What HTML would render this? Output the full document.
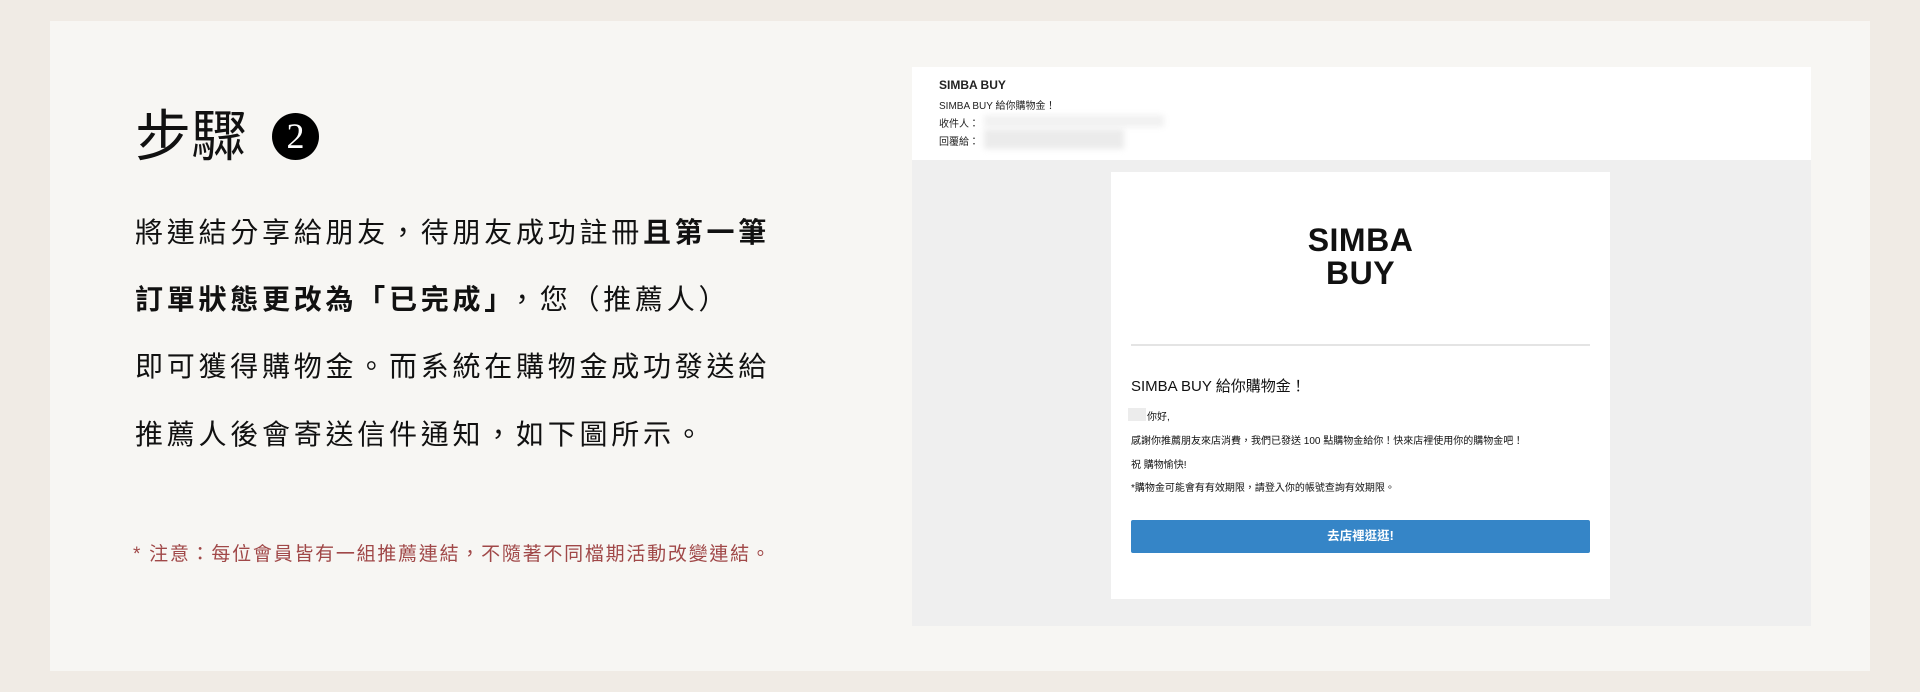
<!DOCTYPE html>
<html><head><meta charset="utf-8">
<style>
*{margin:0;padding:0;box-sizing:border-box}
body{width:1920px;height:692px;background:#f0ebe5;position:relative;overflow:hidden;font-family:"Liberation Sans","Noto Sans CJK TC",sans-serif;color:#111}
.panel{position:absolute;left:50px;top:21px;width:1820px;height:650px;background:#f7f6f3}
.abs{position:absolute;white-space:nowrap}
.title{left:135px;top:102px;font-size:56px;line-height:70px;font-weight:400;letter-spacing:0px}
.circ{left:272px;top:113px;width:47px;height:47px;border-radius:50%;background:#000;color:#fff;font-family:"Liberation Serif",serif;font-size:36px;line-height:47px;text-align:center}
.p{left:135px;font-size:28px;letter-spacing:3.75px;line-height:34px}
.note{left:133px;top:539px;font-size:19px;letter-spacing:1.75px;color:#a04848}
.mail{position:absolute;left:912px;top:67px;width:899px;height:559px;background:#efefef}
.hdr{position:absolute;left:0;top:0;width:899px;height:93px;background:#fff}
.h{position:absolute;left:27px;font-size:11px;color:#222}
.blur{position:absolute;background:#f1f1f1;filter:blur(3px)}
.card{position:absolute;left:199px;top:105px;width:499px;height:427px;background:#fff}
</style></head><body>
<div class="panel"></div>
<div class="abs title">步驟</div>
<div class="abs circ">2</div>
<div class="abs p" style="top:216px">將連結分享給朋友，待朋友成功註冊<b>且第一筆</b></div>
<div class="abs p" style="top:283px"><b>訂單狀態更改為「已完成」</b><span style="margin-left:6px">，您（推薦人）</span></div>
<div class="abs p" style="top:350px">即可獲得購物金。而系統在購物金成功發送給</div>
<div class="abs p" style="top:418px">推薦人後會寄送信件通知，如下圖所示。</div>
<div class="abs note">* 注意：每位會員皆有一組推薦連結，不隨著不同檔期活動改變連結。</div>

<div class="mail">
 <div class="hdr">
  <div class="h" style="top:11px;font-weight:bold;font-size:12px">SIMBA BUY</div>
  <div class="h" style="top:30px;font-size:10px">SIMBA BUY 給你購物金！</div>
  <div class="h" style="top:48px;font-size:10px">收件人：</div>
  <div class="h" style="top:66px;font-size:10px">回覆給：</div>
  <div class="blur" style="left:72px;top:48px;width:180px;height:12px"></div>
  <div class="blur" style="left:72px;top:62px;width:140px;height:20px;background:#ebebeb"></div>
 </div>
 <div class="card">
  <div class="abs" style="left:0;width:499px;text-align:center;top:52px;font-size:32px;font-weight:bold;line-height:33px;letter-spacing:0.5px">SIMBA<br>BUY</div>
  <div class="abs" style="left:20px;top:172px;width:459px;height:2px;background:#e4e4e4"></div>
  <div class="abs" style="left:20px;top:203px;font-size:15px">SIMBA BUY 給你購物金！</div>
  <div class="abs" style="left:17px;top:236px;width:18px;height:13px;background:#ececec"></div>
  <div class="abs" style="left:36px;top:236px;font-size:10px">你好,</div>
  <div class="abs" style="left:20px;top:260px;font-size:10px">感謝你推薦朋友來店消費，我們已發送 100 點購物金給你！快來店裡使用你的購物金吧！</div>
  <div class="abs" style="left:20px;top:284px;font-size:10px">祝 購物愉快!</div>
  <div class="abs" style="left:20px;top:307px;font-size:10px">*購物金可能會有有效期限，請登入你的帳號查詢有效期限。</div>
  <div class="abs" style="left:20px;top:348px;width:459px;height:33px;background:#3585c7;border-radius:2px;color:#fff;text-align:center;line-height:33px;font-size:12.5px;font-weight:bold">去店裡逛逛!</div>
 </div>
</div>
</body></html>
